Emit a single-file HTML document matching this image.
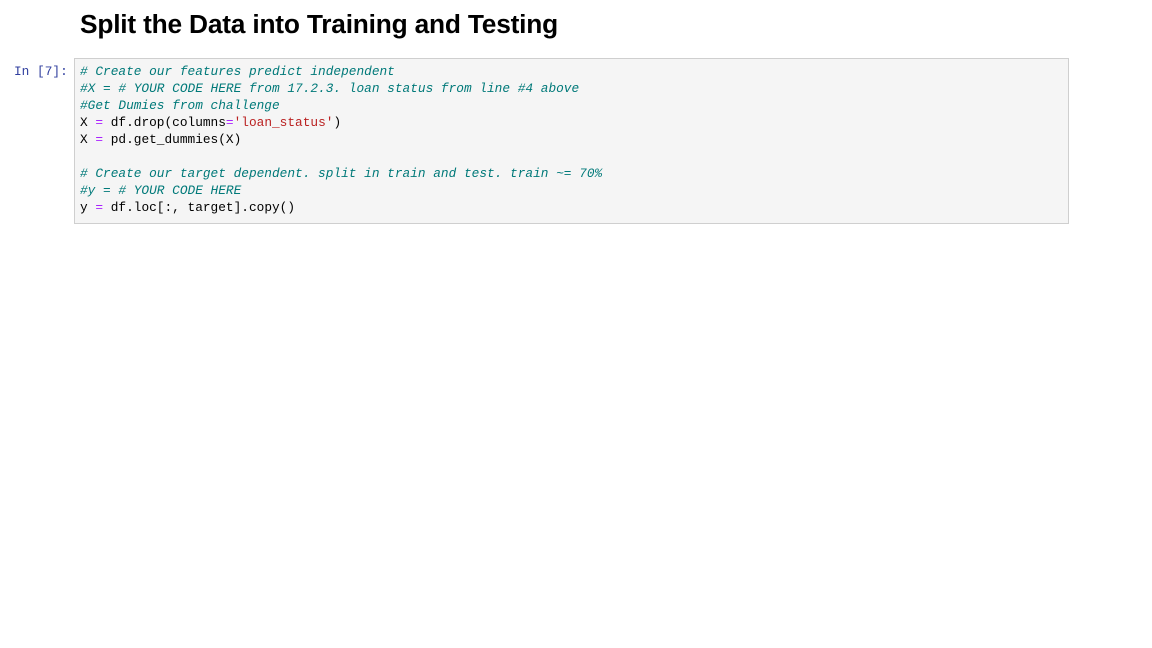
<!DOCTYPE html>
<html><head><meta charset="utf-8"><style>
body{margin:0;width:1152px;height:648px;background:#fff;overflow:hidden;font-family:"Liberation Sans",sans-serif;}
h1{position:absolute;left:80px;top:9px;margin:0;font-size:26.3px;font-weight:bold;color:#000;letter-spacing:-0.2px}
.prompt{position:absolute;left:14px;top:63px;font-family:"Liberation Mono",monospace;font-size:12.8px;color:#303f9f;line-height:17px}
.cell{position:absolute;left:74px;top:58px;width:993px;height:164px;background:#f5f5f5;border:1px solid #cfcfcf;}
pre{margin:0;position:absolute;left:5px;top:4px;font-family:"Liberation Mono",monospace;font-size:12.8px;line-height:17px;color:#000}
.c{color:#007979;font-style:italic}
.o{color:#aa22ff}
.s{color:#ba2121}
</style></head><body>
<h1>Split the Data into Training and Testing</h1>
<div class="prompt">In [7]:</div>
<div class="cell"><pre><span class="c"># Create our features predict independent</span>
<span class="c">#X = # YOUR CODE HERE from 17.2.3. loan status from line #4 above</span>
<span class="c">#Get Dumies from challenge</span>
X <span class="o">=</span> df.drop(columns<span class="o">=</span><span class="s">'loan_status'</span>)
X <span class="o">=</span> pd.get_dummies(X)

<span class="c"># Create our target dependent. split in train and test. train ~= 70%</span>
<span class="c">#y = # YOUR CODE HERE</span>
y <span class="o">=</span> df.loc[:, target].copy()</pre></div>
</body></html>
